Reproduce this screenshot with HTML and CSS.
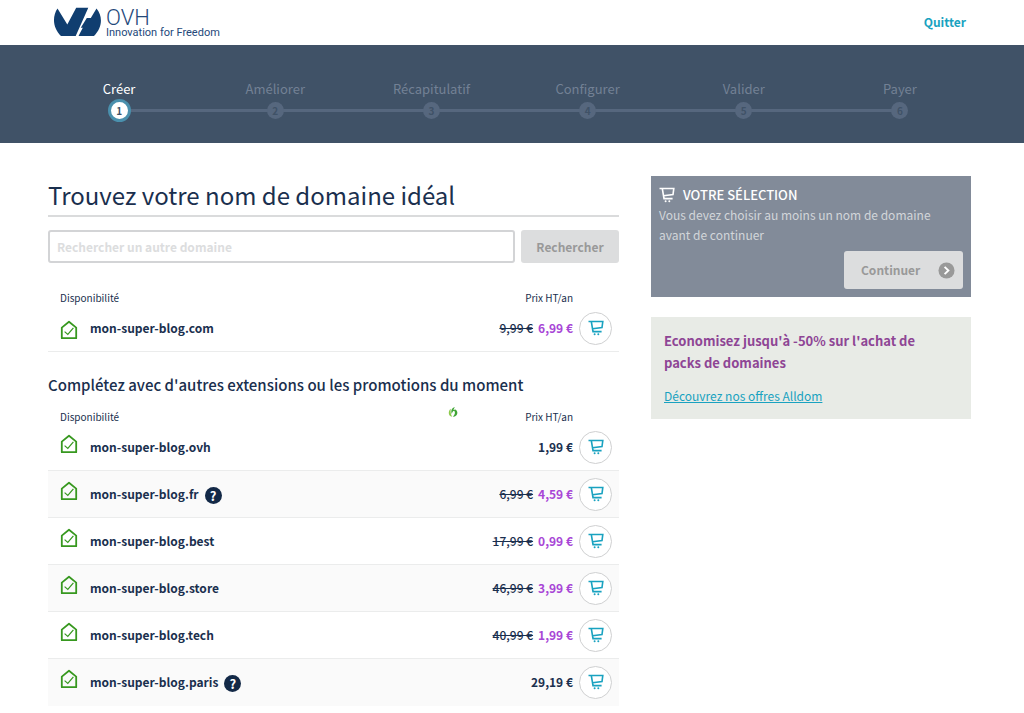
FILE: index.html
```html
<!DOCTYPE html>
<html lang="fr">
<head>
<meta charset="utf-8">
<meta name="viewport" content="width=device-width, initial-scale=1">
<title>OVH - Trouvez votre nom de domaine</title>
<link rel="stylesheet" href="styles.css">
</head>
<body>
<svg class="sprite" aria-hidden="true">
  <symbol id="cart" viewBox="0 0 16 16">
    <path d="M.5 1.500H14.800L14 7.600 4.600 8.800M3.300 1.500 5 11.600H13.600M5 11.600 6 11" fill="none" stroke="currentColor" stroke-width="1.600"/>
    <circle cx="6.600" cy="14.300" r="1"/><circle cx="10.300" cy="14.300" r="1"/>
  </symbol>
  <symbol id="house" viewBox="0 0 18 20">
    <path d="M1.8 7.6 9 1.8 16.200 7.600V18.200H1.800Z" fill="none" stroke="currentColor" stroke-width="1.800" stroke-linejoin="round"/>
    <path d="M4.600 11.600 7.800 14.500 13.400 7.800" fill="none" stroke="currentColor" stroke-width="1.200"/>
  </symbol>
</svg>

<header class="topbar">
  <a class="logo" href="#">
    <svg class="logo-mark" viewBox="0 0 49 30" aria-hidden="true">
      <path d="M4.500 1.500 14.300 17.500 23.200 .7H35.300L22.700 28.900H8C-.5 21 -.8 9 4.500 1.500Z"/>
      <path d="M43.500 1.500C50 9 49.500 21 41 28.900H25.500L29.800 20.700H27.800L33.800 11H37.800Z"/>
    </svg>
    <span class="logo-text"><span class="logo-name">OVH</span><span class="logo-tag">Innovation for Freedom</span></span>
  </a>
  <a class="quit" href="#">Quitter</a>
</header>

<nav class="stepper" aria-label="Étapes">
  <ol class="steps">
    <li class="step current" aria-current="step"><span>Créer</span><span class="dot">1</span></li>
    <li class="step"><span>Améliorer</span><span class="dot">2</span></li>
    <li class="step"><span>Récapitulatif</span><span class="dot">3</span></li>
    <li class="step"><span>Configurer</span><span class="dot">4</span></li>
    <li class="step"><span>Valider</span><span class="dot">5</span></li>
    <li class="step"><span>Payer</span><span class="dot">6</span></li>
  </ol>
</nav>

<div class="page">
  <main>
    <h1 class="title">Trouvez votre nom de domaine idéal</h1>
    <form class="search">
      <input class="search-input" type="text" placeholder="Rechercher un autre domaine" aria-label="Rechercher un autre domaine">
      <button class="search-button" type="submit" disabled>Rechercher</button>
    </form>

    <table class="domains domains-main">
      <colgroup><col class="w-state"><col><col class="w-price"><col class="w-cart"></colgroup>
      <thead><tr><th class="col-name" colspan="2">Disponibilité</th><th class="col-price">Prix HT/an</th><th></th></tr></thead>
      <tbody>
        <tr><td class="state"><svg class="house"><use href="#house"/></svg></td><td class="name">mon-super-blog.com</td><td class="price"><s>9,99 €</s><strong class="promo">6,99 €</strong></td><td class="buy"><button class="add" type="button" aria-label="Ajouter au panier"><svg class="cart"><use href="#cart"/></svg></button></td></tr>
      </tbody>
    </table>

    <h2 class="subtitle">Complétez avec d'autres extensions ou les promotions du moment</h2>

    <div class="extensions">
      <svg class="leaf" viewBox="0 0 10 10" aria-hidden="true"><path d="M2.800 1.800C0 4 -.2 9 4.200 9.800 2.600 7.500 2.400 4.500 2.800 1.800Z" fill="#8cc94a"/><path d="M6.800 0C3.500 1 2.600 4 3.800 7 4.200 5 5 4 6.200 3.800 7.600 5.500 6.800 8 4.800 9.800 10.200 9.600 10.500 4.200 7.300 2.600L5.400 3Z" fill="#3fa535"/></svg>
      <table class="domains">
        <colgroup><col class="w-state"><col><col class="w-price"><col class="w-cart"></colgroup>
        <thead><tr><th class="col-name" colspan="2">Disponibilité</th><th class="col-price">Prix HT/an</th><th></th></tr></thead>
        <tbody>
          <tr><td class="state"><svg class="house"><use href="#house"/></svg></td><td class="name">mon-super-blog.ovh</td><td class="price"><strong>1,99 €</strong></td><td class="buy"><button class="add" type="button" aria-label="Ajouter au panier"><svg class="cart"><use href="#cart"/></svg></button></td></tr>
          <tr><td class="state"><svg class="house"><use href="#house"/></svg></td><td class="name">mon-super-blog.fr<button class="help" type="button">?</button></td><td class="price"><s>6,99 €</s><strong class="promo">4,59 €</strong></td><td class="buy"><button class="add" type="button" aria-label="Ajouter au panier"><svg class="cart"><use href="#cart"/></svg></button></td></tr>
          <tr><td class="state"><svg class="house"><use href="#house"/></svg></td><td class="name">mon-super-blog.best</td><td class="price"><s>17,99 €</s><strong class="promo">0,99 €</strong></td><td class="buy"><button class="add" type="button" aria-label="Ajouter au panier"><svg class="cart"><use href="#cart"/></svg></button></td></tr>
          <tr><td class="state"><svg class="house"><use href="#house"/></svg></td><td class="name">mon-super-blog.store</td><td class="price"><s>46,99 €</s><strong class="promo">3,99 €</strong></td><td class="buy"><button class="add" type="button" aria-label="Ajouter au panier"><svg class="cart"><use href="#cart"/></svg></button></td></tr>
          <tr><td class="state"><svg class="house"><use href="#house"/></svg></td><td class="name">mon-super-blog.tech</td><td class="price"><s>40,99 €</s><strong class="promo">1,99 €</strong></td><td class="buy"><button class="add" type="button" aria-label="Ajouter au panier"><svg class="cart"><use href="#cart"/></svg></button></td></tr>
          <tr><td class="state"><svg class="house"><use href="#house"/></svg></td><td class="name">mon-super-blog.paris<button class="help" type="button">?</button></td><td class="price"><strong>29,19 €</strong></td><td class="buy"><button class="add" type="button" aria-label="Ajouter au panier"><svg class="cart"><use href="#cart"/></svg></button></td></tr>
        </tbody>
      </table>
    </div>
  </main>

  <aside class="side">
    <section class="selection">
      <h2 class="selection-title"><svg class="cart"><use href="#cart"/></svg>VOTRE SÉLECTION</h2>
      <p class="selection-text">Vous devez choisir au moins un nom de domaine avant de continuer</p>
      <button class="continue" type="button" disabled>Continuer
        <svg class="continue-icon" viewBox="0 0 18 18" aria-hidden="true"><circle cx="9" cy="9" r="8.500" fill="#999"/><path d="M7 5.200 11 9 7 12.800" fill="none" stroke="#fff" stroke-width="2"/></svg>
      </button>
    </section>
    <section class="promo-box">
      <h2 class="promo-title">Economisez jusqu'à -50% sur l'achat de packs de domaines</h2>
      <a class="promo-link" href="#">Découvrez nos offres Alldom</a>
    </section>
  </aside>
</div>
</body>
</html>
```
FILE: styles.css
```css
* { box-sizing: border-box; }
body {
  margin: 0;
  background: #fff;
  color: #1a2f4e;
  font: 13px/20px "Noto Sans CJK SC", "Noto Sans", sans-serif;
}
h1, h2, p { margin: 0; }
button, input { font: inherit; }
.sprite { position: absolute; width: 0; height: 0; }

.topbar {
  display: flex;
  align-items: center;
  justify-content: space-between;
  height: 45px;
  padding: 0 58px 2px 53px;
}
.logo { display: flex; align-items: center; gap: 4px; color: #24487a; text-decoration: none; }
.logo-mark { width: 49px; height: 30px; fill: #103e70; }
.logo-text { display: flex; flex-direction: column; padding-top: 4px; font-family: Roboto, sans-serif; }
.logo-name { font-size: 22px; line-height: 18px; font-weight: 300; }
.logo-tag { font-size: 11px; line-height: 12px; font-weight: 400; }
.quit { color: #19a2c0; font-weight: 700; font-size: 12px; text-decoration: none; }

.stepper { background: #405267; padding: 34px 46px 21px 41px; }
.steps { display: grid; grid-template-columns: repeat(6, 1fr); margin: 0; padding: 0; list-style: none; }
.step {
  position: relative;
  display: flex;
  flex-direction: column;
  align-items: center;
  color: #738195;
  font-size: 13px;
}
.step + .step::before {
  content: "";
  position: absolute;
  top: 30px;
  right: 50%;
  width: 100%;
  height: 3px;
  background: #56677e;
}
.dot {
  position: relative;
  z-index: 1;
  display: grid;
  place-items: center;
  width: 23px;
  height: 23px;
  border: 3px solid transparent;
  border-radius: 50%;
  background: #56677e;
  background-clip: padding-box;
  color: #405267;
  font-size: 10px;
  line-height: 17px;
  font-weight: 700;
}
.current { color: #fff; }
.current .dot { border-color: #4a90ad; background: #fff; z-index: 2; }

.page {
  display: grid;
  grid-template-columns: minmax(0, 1fr) 320px;
  gap: 32px;
  align-items: start;
  padding: 33px 53px 8px 48px;
}
.title {
  height: 41px;
  border-bottom: 2px solid #dadbdc;
  font-size: 24px;
  line-height: 38px;
  font-weight: 400;
}
.search { display: flex; gap: 6px; margin-top: 13px; }
.search-input {
  flex: 1;
  min-width: 0;
  height: 33px;
  padding: 0 7px;
  border: 2px solid #d3d4d6;
  border-radius: 3px;
  color: #1a2f4e;
  font-size: 12px;
  font-weight: 700;
}
.search-input::placeholder { color: #dcddde; opacity: 1; }
.search-button {
  width: 98px;
  border: 0;
  border-radius: 3px;
  background: #dcddde;
  color: #999;
  font-size: 12px;
  font-weight: 700;
}

.domains { width: 100%; border-collapse: separate; border-spacing: 0; table-layout: fixed; }
.domains-main { margin-top: 27px; }
.w-state { width: 42px; }
.w-price { width: 120px; }
.w-cart { width: 46px; }
.domains th { height: 15px; padding: 0; font-size: 10px; line-height: 15px; font-weight: 400; }
.domains .col-name { padding-left: 12px; text-align: left; }
.domains .col-price { text-align: right; }
.domains td { height: 47px; padding: 0; border-bottom: 1px solid #ebecec; }
.domains tr:nth-child(even) td { background: #fafafa; }
.domains tr:last-child td { border-bottom-color: #fafafa; }
.domains-main tr:last-child td { border-bottom-color: #ebecec; }
.domains .state { padding: 0 0 7px 12px; }
.domains-main .state { padding: 3px 0 0 12px; }
.house { display: block; width: 18px; height: 20px; color: #37981f; }
.name { font-weight: 700; font-size: 12px; }
.price { text-align: right; font-size: 12px; font-weight: 500; }
.price strong { margin-left: 5px; font-weight: 700; }
.price .promo { color: #a846d6; }
.add {
  display: grid;
  place-items: center;
  width: 33px;
  height: 33px;
  margin-left: 6px;
  padding: 0;
  border: 1px solid #cfd0d1;
  border-radius: 50%;
  background: #fff;
  color: #19a2c0;
}
.cart { display: block; width: 16px; height: 16px; fill: currentColor; }
.help {
  width: 17px;
  height: 17px;
  margin-left: 6px;
  padding: 0;
  border: 0;
  border-radius: 50%;
  background: #132947;
  color: #fff;
  font-size: 13px;
  line-height: 17px;
  font-weight: 700;
  vertical-align: middle;
}
.subtitle { margin: 21px 0 12px; font-size: 15px; line-height: 24px; font-weight: 500; }
.extensions { position: relative; }
.leaf { position: absolute; left: 400px; top: -2px; width: 10px; height: 10px; }

.selection { display: flow-root; background: #828b99; padding: 9px 8px 8px; }
.selection-title {
  display: flex;
  align-items: center;
  gap: 8px;
  color: #fff;
  font-size: 13px;
  line-height: 20px;
  font-weight: 500;
}
.selection-text { color: #d2d6da; font-size: 12px; line-height: 20px; font-weight: 400; }
.continue {
  display: flex;
  align-items: center;
  justify-content: space-between;
  width: 119px;
  height: 38px;
  margin: 6px 0 0 auto;
  padding: 0 8px 0 17px;
  border: 0;
  border-radius: 3px;
  background: #dcddde;
  color: #999;
  font-size: 12px;
  font-weight: 700;
}
.continue-icon { width: 17px; height: 17px; }
.promo-box { margin-top: 20px; padding: 13px 32px 13px 13px; background: #e8ebe6; }
.promo-title { color: #8e4595; font-size: 13px; line-height: 22px; font-weight: 700; }
.promo-link { display: inline-block; margin-top: 12px; color: #19a2c0; font-size: 12px; line-height: 20px; font-weight: 400; }
```
